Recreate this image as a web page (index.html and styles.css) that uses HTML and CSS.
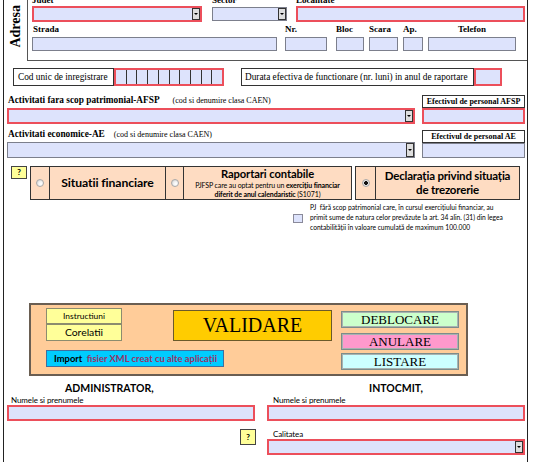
FILE: index.html
```html
<!DOCTYPE html>
<html>
<head>
<meta charset="utf-8">
<title>Formular</title>
<link rel="stylesheet" href="styles.css">
</head>
<body>
<div class="page">
  <div class="adresa">
    <div class="adresa-label"><span>Adresa</span></div>
    <div class="adresa-box">
      <div class="arow">
        <div class="grp w-judet"><div class="lbl1">Judet</div><div class="fld red sel"><span class="dd"></span></div></div>
        <div class="grp w-sector"><div class="lbl1">Sector</div><div class="fld sel off1"><span class="dd"></span></div></div>
        <div class="grp w-loc"><div class="lbl1">Localitate</div><div class="fld red"></div></div>
      </div>
      <div class="arow">
        <div class="grp w-strada"><div class="lbl2 pl1">Strada</div><div class="fld"></div></div>
        <div class="grp w-nr"><div class="lbl2">Nr.</div><div class="fld"></div></div>
        <div class="grp w-bloc"><div class="lbl2">Bloc</div><div class="fld"></div></div>
        <div class="grp w-scara"><div class="lbl2">Scara</div><div class="fld"></div></div>
        <div class="grp w-ap"><div class="lbl2">Ap.</div><div class="fld"></div></div>
        <div class="grp w-tel"><div class="lbl2 center">Telefon</div><div class="fld"></div></div>
      </div>
    </div>
  </div>

  <div class="cui-row">
    <div class="boxlbl cod">Cod unic de inregistrare</div>
    <div class="cui"><span></span><span></span><span></span><span></span><span></span><span></span><span></span><span></span><span></span><span></span></div>
    <div class="boxlbl durata">Durata efectiva de functionare (nr. luni) in anul de raportare</div>
    <div class="fld red luni"></div>
  </div>

  <div class="act">
    <div class="act-left">
      <div class="albl a1">Activitati fara scop patrimonial-AFSP<small class="s1">(cod si denumire clasa CAEN)</small></div>
      <div class="fld red sel"><span class="dd"></span></div>
      <div class="albl a2">Activitati economice-AE<small class="s2">(cod si denumire clasa CAEN)</small></div>
      <div class="fld sel tall"><span class="dd"></span></div>
    </div>
    <div class="act-right">
      <div class="ef ef1">Efectivul de personal AFSP</div>
      <div class="fld red"></div>
      <div class="ef ef2">Efectivul de personal AE</div>
      <div class="fld ae"></div>
    </div>
  </div>

  <div class="opts">
    <div class="help">?</div>
    <div class="ogrp grp1">
      <div class="rc rc1"><span class="radio"></span></div>
      <div class="oc sit"><span class="otitle">Situatii financiare</span></div>
      <div class="rc rc2"><span class="radio"></span></div>
      <div class="oc rap">
        <span class="otitle">Raportari contabile</span>
        <span class="osub">PJFSP care au optat pentru un <b>exercițiu financiar</b></span>
        <span class="osub"><b>diferit de anul calendaristic</b> (S1071)</span>
      </div>
    </div>
    <div class="ogrp grp2">
      <div class="rc rc3"><span class="radio on"></span></div>
      <div class="oc decl"><span class="dtitle">Declarația privind situația<br>de trezorerie</span></div>
    </div>
  </div>

  <div class="note">
    <span class="chk"></span>
    <p>PJ &nbsp;fără scop patrimonial care, în cursul exercițiului financiar, au<br>primit sume de natura celor prevăzute la art. 34 alin. (31) din legea<br>contabilității în valoare cumulată de maximum 100.000</p>
  </div>

  <div class="panel">
    <div class="pleft">
      <div class="ptop">
        <div class="stack">
          <div class="btn instr">Instructiuni</div>
          <div class="btn corel">Corelatii</div>
        </div>
        <div class="btn valid">VALIDARE</div>
      </div>
      <div class="btn import">Import &nbsp;<span class="mag">fisier XML creat cu alte aplicații</span></div>
    </div>
    <div class="pright">
      <div class="btn sbtn deb">DEBLOCARE</div>
      <div class="btn sbtn anu">ANULARE</div>
      <div class="btn sbtn lis">LISTARE</div>
    </div>
  </div>

  <div class="sign">
    <div class="scol sleft">
      <div class="shead">ADMINISTRATOR,</div>
      <div class="slbl">Numele si prenumele</div>
      <div class="fld red"></div>
      <div class="help help2">?</div>
    </div>
    <div class="scol sright">
      <div class="shead">INTOCMIT,</div>
      <div class="slbl">Numele si prenumele</div>
      <div class="fld red"></div>
      <div class="slbl cal">Calitatea</div>
      <div class="fld red sel"><span class="dd"></span></div>
    </div>
  </div>
</div>
</body>
</html>
```

FILE: styles.css
```css
* { box-sizing: border-box; margin: 0; padding: 0; }
html, body { width: 534px; height: 462px; overflow: hidden; background: #fff; }
body { margin: 0; font-family: "Liberation Serif", serif; color: #000; }

.page {
  margin-left: 3px;
  width: 525px;
  height: 462px;
  border-left: 1px solid #222;
  border-right: 1px solid #222;
}

/* fields */
.fld { background: #dde3fc; border: 1px solid #7c7f8c; height: 14px; }
.fld.red { border: 2px solid #ec4f5b; height: 16px; }
.fld.tall { height: 16px; }
.sel { display: flex; justify-content: flex-end; }
.dd {
  width: 8px; height: 100%;
  background: #dedede;
  border: 1px solid #333;
  display: flex; align-items: center; justify-content: center;
}
.dd::after {
  content: "";
  border-left: 2px solid transparent;
  border-right: 2px solid transparent;
  border-top: 2px solid #000;
}

/* adresa */
.adresa { display: flex; height: 61px; }
.adresa-label {
  width: 23px;
  display: flex; align-items: center; justify-content: center;
  padding-bottom: 8px;
}
.adresa-label span {
  writing-mode: vertical-rl;
  transform: rotate(180deg);
  font-weight: bold; font-size: 14px; line-height: 14px;
}
.adresa-box {
  flex: 1;
  margin-top: -6px;
  border-left: 1px solid #555;
  border-bottom: 1px solid #555;
  padding: 0 0 9px 4px;
}
.arow { display: flex; align-items: flex-start; }
.lbl1 { font-weight: bold; font-size: 9px; line-height: 12px; height: 12px; white-space: nowrap; }
.lbl2 { font-weight: bold; font-size: 9px; line-height: 15px; height: 15px; white-space: nowrap; }
.pl1 { padding-left: 1px; }
.center { text-align: center; }
.off1 { margin-top: 1px; }
.w-judet { width: 170px; }
.w-sector { width: 75px; margin-left: 10px; }
.w-loc { width: 229px; margin-left: 9px; }
.w-strada { width: 245px; }
.w-nr { width: 42px; margin-left: 8px; }
.w-bloc { width: 28px; margin-left: 9px; }
.w-scara { width: 29px; margin-left: 5px; }
.w-ap { width: 20px; margin-left: 5px; }
.w-tel { width: 88px; margin-left: 5px; }

/* cui */
.cui-row { display: flex; margin-top: 7px; height: 18px; }
.boxlbl {
  border: 1px solid #333;
  font-size: 9.3px; line-height: 16px;
  padding-left: 4px;
  white-space: nowrap; overflow: hidden;
}
.cod { margin-left: 9px; width: 101px; }
.cui {
  width: 110px; height: 18px;
  display: flex;
  border: 2px solid #ec4f5b;
  background: #dde3fc;
}
.cui span { flex: 1; border-right: 1px solid #333; }
.cui span:last-child { border-right: 0; }
.durata { margin-left: 17px; width: 233px; padding-left: 3px; }
.fld.luni { width: 28px; height: 18px; }

/* activitati */
.act { display: flex; }
.act-left { margin-left: 3px; width: 408px; }
.act-right { margin-left: 7px; width: 103px; }
.albl { font-weight: bold; font-size: 9.3px; line-height: 12px; white-space: nowrap; }
.albl small { font-weight: normal; font-size: 8px; }
.albl .s1 { margin-left: 13px; }
.albl .s2 { margin-left: 9px; }
.a1 { padding-top: 8px; height: 22px; padding-left: 1px; }
.a2 { padding-top: 4px; height: 18px; padding-left: 1px; }
.ef {
  border: 1px solid #333;
  height: 13px;
  font-size: 8px; font-weight: bold; line-height: 11px;
  text-align: center; white-space: nowrap;
}
.ef1 { margin-top: 9px; }
.ef2 { margin-top: 6px; }
.fld.ae { height: 15px; }

/* options */
.opts { display: flex; margin-top: 8px; height: 34px; }
.help {
  width: 16px; height: 13px;
  background: #ffff99;
  border: 1px solid #444;
  font-family: Lato, sans-serif; font-weight: bold; font-size: 8px; line-height: 11px;
  text-align: center;
}
.opts .help { margin-left: 7px; }
.ogrp { display: flex; border: 1px solid #333; background: #fedcc2; height: 34px; }
.grp1 { margin-left: 3px; width: 322px; }
.grp2 { margin-left: 3px; width: 165px; }
.rc { display: flex; align-items: center; justify-content: center; border-right: 1px solid #333; }
.rc1 { width: 19px; }
.rc2 { width: 18px; }
.rc3 { width: 20px; }
.radio {
  width: 8px; height: 8px; border-radius: 50%;
  border: 1px solid #a9a9a9;
  background: radial-gradient(circle at 65% 65%, #fff 0, #f2f2f2 40%, #c9c9c9 100%);
}
.radio.on {
  background: radial-gradient(circle, #111 0, #111 1.6px, #eee 2.2px, #c9c9c9 100%);
}
.oc {
  display: flex; flex-direction: column; align-items: center; justify-content: center;
  border-right: 1px solid #333;
  text-align: center;
  font-family: Lato, sans-serif;
  white-space: nowrap;
}
.oc:last-child { border-right: 0; }
.sit { width: 116px; }
.rap { flex: 1; }
.decl { flex: 1; }
.otitle { font-weight: bold; font-size: 11px; line-height: 12px; letter-spacing: -0.1px; }
.sit .otitle { font-size: 12.2px; letter-spacing: -0.1px; }
.rap .otitle { margin-bottom: 1px; font-size: 11.2px; }
.osub { font-size: 7px; line-height: 9px; letter-spacing: -0.1px; }
.dtitle { font-weight: bold; font-size: 11.5px; line-height: 14px; letter-spacing: -0.2px; }

/* note */
.note { display: flex; margin-top: 2px; margin-left: 289px; }
.chk { width: 10px; height: 9px; border: 1px solid #8a8a9a; background: #dde3fc; margin-top: 12px; flex: none; }
.note p { margin-left: 7px; font-family: Lato, sans-serif; font-size: 6.7px; line-height: 10px; white-space: nowrap; }

/* panel */
.panel {
  margin: 71px 0 0 25px;
  width: 439px; height: 73px;
  border: 2px solid #6a5e52;
  background: #ffcc99;
  display: flex;
  padding: 1px 0 0 15px;
}
.pleft { width: 286px; padding-top: 2px; }
.ptop { display: flex; }
.stack { width: 76px; }
.btn { text-align: center; white-space: nowrap; }
.instr, .corel { background: #ffff99; border: 1px solid #8c8c6e; font-family: Lato, sans-serif; }
.instr { height: 16px; font-size: 8.4px; line-height: 14px; }
.corel { height: 17px; font-size: 10.4px; line-height: 15px; }
.valid {
  margin-left: 51px; margin-top: 2px;
  width: 159px; height: 31px;
  background: #ffcc00;
  border: 1px solid #6b5a2a;
  font-size: 20px; line-height: 29px;
}
.import {
  margin-top: 9px;
  width: 178px; height: 17px;
  background: #00ccff;
  border: 1px solid #3f6f9f;
  font-family: Lato, sans-serif; font-weight: bold; font-size: 9.4px; line-height: 15px;
  text-align: left; padding-left: 7px;
}
.import .mag { color: #993366; }
.pright { margin-left: 9px; padding-top: 5px; width: 118px; }
.sbtn { height: 17px; border: 1px solid #7e8c8a; box-shadow: inset 0 0 0 1px #a9b3b1; font-size: 13px; line-height: 15px; }
.deb { background: #ccffcc; }
.anu { background: #ff99cc; margin-top: 5px; }
.lis { background: #ccffff; margin-top: 3px; }

/* signatures */
.sign { display: flex; margin-top: 5px; }
.scol { display: flex; flex-direction: column; }
.sleft { width: 248px; margin-left: 3px; }
.sright { width: 258px; margin-left: 12px; }
.shead { font-family: Lato, sans-serif; font-weight: bold; font-size: 10.5px; line-height: 14px; height: 14px; white-space: nowrap; }
.sleft .shead { padding-left: 58px; }
.sright .shead { text-align: center; }
.slbl { font-family: Lato, sans-serif; font-size: 8px; line-height: 10px; height: 10px; padding-left: 4px; white-space: nowrap; letter-spacing: -0.1px; }
.sright .slbl { padding-left: 6px; }
.slbl.cal { margin-top: 8px; }
.help2 { margin-top: 8px; align-self: flex-end; margin-right: -1px; height: 16px; line-height: 14px; }
```
